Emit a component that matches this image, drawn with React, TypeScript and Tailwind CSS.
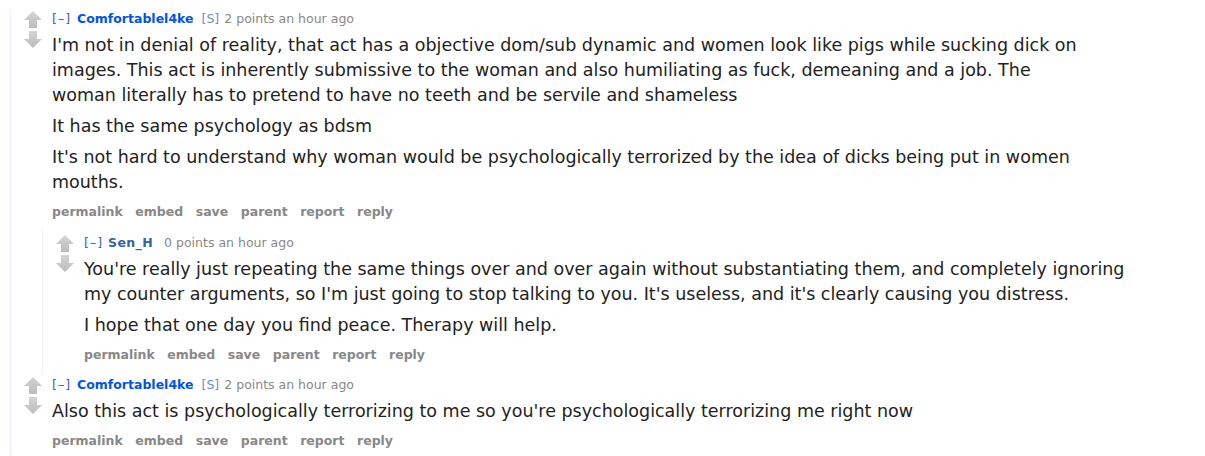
import React from 'react';

type CommentProps = {
  author: string;
  submitter?: boolean;
  points: string;
  paragraphs: string[];
};

const ArrowUp = () => (
  <svg width="18" height="17" viewBox="0 0 18 17">
    <defs>
      <linearGradient id="gUp" x1="0" y1="0" x2="0" y2="1">
        <stop offset="0" stopColor="#d4d4d4" />
        <stop offset="1" stopColor="#bcbcbc" />
      </linearGradient>
    </defs>
    <polygon points="9,0 18,9 13,9 13,17 5,17 5,9 0,9" fill="url(#gUp)" />
  </svg>
);

const ArrowDown = () => (
  <svg width="18" height="17" viewBox="0 0 18 17">
    <defs>
      <linearGradient id="gDown" x1="0" y1="0" x2="0" y2="1">
        <stop offset="0" stopColor="#d4d4d4" />
        <stop offset="1" stopColor="#bcbcbc" />
      </linearGradient>
    </defs>
    <polygon points="5,0 13,0 13,8 18,8 9,17 0,8 5,8" fill="url(#gDown)" />
  </svg>
);

const buttons = ['permalink', 'embed', 'save', 'parent', 'report', 'reply'];

const Comment = ({ author, submitter, points, paragraphs }: CommentProps) => {
  return (
    <div className="flex pl-[13px]">
      {/* vote arrows */}
      <div className="flex w-[18px] shrink-0 flex-col gap-[3px]">
        <ArrowUp />
        <ArrowDown />
      </div>

      <div className="ml-[10px] flex-1">
        <div className="flex items-baseline whitespace-nowrap text-[12.5px] leading-[16px] text-[#888]">
          <span className="tracking-[1px] text-[#369]">[–]</span>
          <span
            className={
              submitter
                ? 'ml-[6px] font-bold text-[#0055df]'
                : 'ml-[5px] font-bold tracking-[0.4px] text-[#369]'
            }
          >
            {author}
          </span>
          {submitter ? (
            <span className="ml-[8px] mr-[5px] text-[#6b8fc4]">[S]</span>
          ) : (
            <span className="w-[11px]" />
          )}
          <span>{points}</span>
        </div>

        <div className="mt-[6px] max-w-[1046px] text-[17.5px] leading-[25px] text-[#222]">
          {paragraphs.map((p, i) => (
            <p key={i} className="mb-[6px] last:mb-0">
              {p}
            </p>
          ))}
        </div>

        <ul className="mt-[9px] flex gap-[12.5px] text-[12.5px] font-bold leading-[16px] text-[#888]">
          {buttons.map((b) => (
            <li key={b}>{b}</li>
          ))}
        </ul>
      </div>
    </div>
  );
};

const App = () => {
  return (
    <div
      className="h-[456px] w-[1205px] overflow-hidden bg-white"
      style={{ fontFamily: '"DejaVu Sans", Verdana, sans-serif' }}
    >
      <div className="ml-[10px] mt-[11px] border-l border-dotted border-[#ddf] pb-[20px]">
        <Comment
          author="Comfortablel4ke"
          submitter
          points="2 points an hour ago"
          paragraphs={[
            "I'm not in denial of reality, that act has a objective dom/sub dynamic and women look like pigs while sucking dick on images. This act is inherently submissive to the woman and also humiliating as fuck, demeaning and a job. The woman literally has to pretend to have no teeth and be servile and shameless",
            'It has the same psychology as bdsm',
            "It's not hard to understand why woman would be psychologically terrorized by the idea of dicks being put in women mouths.",
          ]}
        />

        {/* nested reply */}
        <div className="ml-[31px] mt-[9px] border-l border-dotted border-[#ddf] pb-[11px] pt-[6px]">
          <Comment
            author="Sen_H"
            points="0 points an hour ago"
            paragraphs={[
              "You're really just repeating the same things over and over again without substantiating them, and completely ignoring my counter arguments, so I'm just going to stop talking to you. It's useless, and it's clearly causing you distress.",
              'I hope that one day you find peace. Therapy will help.',
            ]}
          />
        </div>

        <div className="mt-[3px]">
          <Comment
            author="Comfortablel4ke"
            submitter
            points="2 points an hour ago"
            paragraphs={[
              "Also this act is psychologically terrorizing to me so you're psychologically terrorizing me right now",
            ]}
          />
        </div>
      </div>
    </div>
  );
};

export default App;
